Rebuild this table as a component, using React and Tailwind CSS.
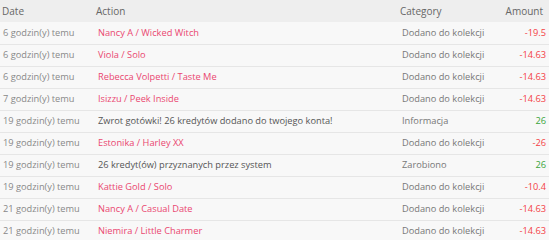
import React from "react";

const rows = [
  { date: "6 godzin(y) temu", action: "Nancy A / Wicked Witch", link: true, category: "Dodano do kolekcji", amount: "-19.5" },
  { date: "6 godzin(y) temu", action: "Viola / Solo", link: true, category: "Dodano do kolekcji", amount: "-14.63" },
  { date: "6 godzin(y) temu", action: "Rebecca Volpetti / Taste Me", link: true, category: "Dodano do kolekcji", amount: "-14.63" },
  { date: "7 godzin(y) temu", action: "Isizzu / Peek Inside", link: true, category: "Dodano do kolekcji", amount: "-14.63" },
  { date: "19 godzin(y) temu", action: "Zwrot gotówki! 26 kredytów dodano do twojego konta!", link: false, category: "Informacja", amount: "26" },
  { date: "19 godzin(y) temu", action: "Estonika / Harley XX", link: true, category: "Dodano do kolekcji", amount: "-26" },
  { date: "19 godzin(y) temu", action: "26 kredyt(ów) przyznanych przez system", link: false, category: "Zarobiono", amount: "26" },
  { date: "19 godzin(y) temu", action: "Kattie Gold / Solo", link: true, category: "Dodano do kolekcji", amount: "-10.4" },
  { date: "21 godzin(y) temu", action: "Nancy A / Casual Date", link: true, category: "Dodano do kolekcji", amount: "-14.63" },
  { date: "21 godzin(y) temu", action: "Niemira / Little Charmer", link: true, category: "Dodano do kolekcji", amount: "-14.63" },
];

export default function App() {
  return (
    <div className="w-[549px] h-[240px] overflow-hidden bg-white font-['Open_Sans',sans-serif]">
      <table className="w-[549px] table-fixed border-collapse">
        <colgroup>
          <col className="w-[96px]" />
          <col className="w-[304px]" />
          <col className="w-[100px]" />
          <col className="w-[49px]" />
        </colgroup>
        <thead>
          <tr className="bg-[#eeeeee] text-[10px] text-[#666] h-[22px]">
            <th className="font-normal text-left pl-[2px]">Date</th>
            <th className="font-normal text-left">Action</th>
            <th className="font-normal text-left">Category</th>
            <th className="font-normal text-right pr-[6px]">Amount</th>
          </tr>
        </thead>
        <tbody>
          {rows.map((r, i) => (
            <tr key={i} className="h-[22px] text-[9.25px] bg-[#f8f8f8] border-b border-[#e6e6e6]">
              <td className="pl-[3px] text-[#888] whitespace-nowrap">{r.date}</td>
              <td className={`pl-[2px] whitespace-nowrap overflow-hidden ${r.link ? "text-[#ea4770]" : "text-[#555]"}`}>{r.action}</td>
              <td className="pl-[2px] text-[#777] whitespace-nowrap">{r.category}</td>
              <td className={`pr-[3px] text-right ${r.amount.startsWith("-") ? "text-[#f43f45]" : "text-[#3aa53a]"}`}>{r.amount}</td>
            </tr>
          ))}
        </tbody>
      </table>
    </div>
  );
}
